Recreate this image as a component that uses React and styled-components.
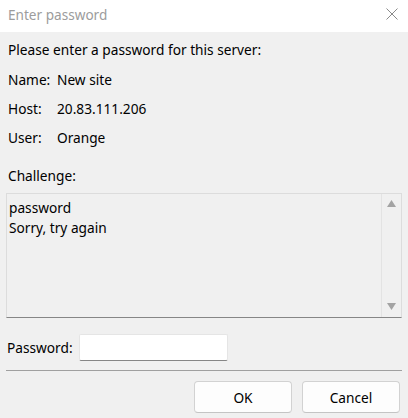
import React from 'react'
import styled, { createGlobalStyle } from 'styled-components'

const GlobalStyle = createGlobalStyle`
  html, body {
    margin: 0;
    padding: 0;
    background: #f0f0f0;
  }
  * {
    box-sizing: border-box;
  }
`

const font = `"Noto Sans", "Liberation Sans", sans-serif`

const Dialog = styled.div`
  width: 408px;
  height: 418px;
  background: #f0f0f0;
  font-family: ${ font };
  font-size: 13.7px;
  color: #000;
  display: flex;
  flex-direction: column;
`

const TitleBar = styled.div`
  height: 32px;
  background: #fff;
  display: flex;
  align-items: center;
  justify-content: space-between;
  padding: 0 10px 4px 8px;
  color: #9c9c9c;
  font-size: 13.6px;
`

const Body = styled.div`
  padding: 8px 6px 0 6px;
  display: flex;
  flex-direction: column;
`

const Line = styled.div`
  line-height: 20px;
  padding-left: 2px;
  margin-top: ${ p => p.gap || 0 }px;
`

const InfoGrid = styled.div`
  display: grid;
  grid-template-columns: 49px auto;
  row-gap: 9px;
  margin-top: 10px;
  padding-left: 2px;
  line-height: 20px;
`

const ChallengeBox = styled.div`
  margin-top: 7px;
  height: 125px;
  display: flex;
  border: 1px solid #dcdcdc;
  border-bottom-color: #868686;
`

const ChallengeText = styled.div`
  flex: 1;
  padding: 4px 2px;
  line-height: 20px;
`

const ScrollBar = styled.div`
  width: 20px;
  border-left: 1px solid #e3e3e3;
  display: flex;
  flex-direction: column;
  justify-content: space-between;
  align-items: center;
  padding: 6px 0 7px 0;
  color: #a3a3a3;
`

const PasswordRow = styled.div`
  margin-top: 16px;
  display: flex;
  align-items: center;
  gap: 6px;
  padding-left: 1px;
`

const Input = styled.input`
  width: 149px;
  height: 27px;
  background: #fff;
  border: 1px solid #e5e5e5;
  border-bottom: 1px solid #868686;
  border-radius: 2px;
  outline: none;
  font-family: ${ font };
`

const Separator = styled.div`
  margin-top: 9px;
  height: 1px;
  background: #a0a0a0;
`

const ButtonRow = styled.div`
  margin-top: 10px;
  display: flex;
  justify-content: flex-end;
  gap: 10px;
  padding-right: 2px;
`

const Button = styled.button`
  width: 98px;
  height: 32px;
  background: #fdfdfd;
  border: 1px solid #d2d2d2;
  border-bottom-color: #c4c4c4;
  border-radius: 4px;
  font-family: ${ font };
  font-size: 13.7px;
  color: #000;
`

const Arrow = ({ up }) => (
  <svg width="9" height="7" viewBox="0 0 9 7">
    <path d={ up ? 'M4.5 0 L9 7 L0 7 Z' : 'M0 0 L9 0 L4.5 7 Z' } fill="currentColor" />
  </svg>
)

const App = () => (
  <Dialog>
    <GlobalStyle />
    <TitleBar>
      <span>Enter password</span>
      <svg width="12" height="12" viewBox="0 0 12 12">
        <path d="M0.5 0.5 L11.5 11.5 M11.5 0.5 L0.5 11.5" stroke="#8a8a8a" strokeWidth="1" />
      </svg>
    </TitleBar>
    <Body>
      <Line>Please enter a password for this server:</Line>
      <InfoGrid>
        <span>Name:</span><span>New site</span>
        <span>Host:</span><span>20.83.111.206</span>
        <span>User:</span><span>Orange</span>
      </InfoGrid>
      <Line gap={18}>Challenge:</Line>
      <ChallengeBox>
        <ChallengeText>
          password<br />
          Sorry, try again
        </ChallengeText>
        <ScrollBar>
          <Arrow up />
          <Arrow />
        </ScrollBar>
      </ChallengeBox>
      <PasswordRow>
        <span>Password:</span>
        <Input type="password" />
      </PasswordRow>
      <Separator />
      <ButtonRow>
        <Button>OK</Button>
        <Button>Cancel</Button>
      </ButtonRow>
    </Body>
  </Dialog>
)

export default App
